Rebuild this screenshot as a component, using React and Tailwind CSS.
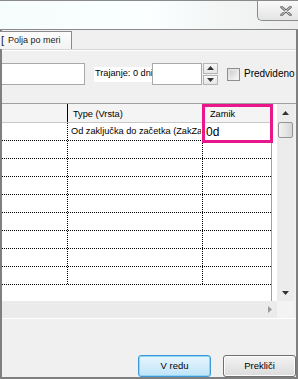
import React from 'react';

const rows = Array.from({ length: 9 });

const Up = () => (
  <svg width="7" height="4" viewBox="0 0 7 4"><path d="M0 4 L3.5 0 L7 4 Z" fill="#333" /></svg>
);
const Down = () => (
  <svg width="7" height="4" viewBox="0 0 7 4"><path d="M0 0 L3.5 4 L7 0 Z" fill="#333" /></svg>
);

export default function App() {
  return (
    <div className="relative w-[298px] h-[379px] overflow-hidden bg-[#f0f0f0] text-[9.2px] leading-none text-black" style={{ fontFamily: '"Liberation Sans", Arial, sans-serif' }}>
      {/* Title bar */}
      <div className="relative h-[30px] border-t border-b border-[#8a8a8a] bg-gradient-to-r from-[#f6fdfd] via-[#fbffff] to-[#ececec]">
        <div className="absolute right-0 top-0 w-[41px] h-[20px] border-l border-b border-[#8c8c8c] rounded-bl-[5px] bg-gradient-to-b from-[#fafafa] to-[#e4e4e4] flex items-center justify-center pl-[16px]">
          <svg width="12" height="10" viewBox="0 0 12 10">
            <path d="M1.5 1 L10.5 9 M10.5 1 L1.5 9" stroke="#6a6a6a" strokeWidth="2.6" strokeLinecap="round" />
            <path d="M1.5 1 L10.5 9 M10.5 1 L1.5 9" stroke="#f4f4f4" strokeWidth="0.8" strokeLinecap="round" />
          </svg>
        </div>
      </div>

      {/* Body with window borders */}
      <div className="h-[349px] border-l-2 border-r-2 border-b-2 border-[#7f7f7f] flex flex-col">
        {/* Tab row */}
        <div className="h-[20px] flex items-end border-b border-[#d6d6d6]">
          <div className="h-[18px] w-[72px] -ml-[2px] border-t border-r border-[#8a8a8a] bg-gradient-to-b from-[#fdfdfd] to-[#f3f3f3] flex items-center pl-[1px] whitespace-nowrap text-[9px]">
            <span className="text-[#222] text-[11px]">[</span>
            <span className="ml-[4px] text-[#1a1a1a]">Polja po meri</span>
          </div>
        </div>
        <div className="h-px bg-white" />

        {/* Inputs row */}
        <div className="mt-[12px] h-[22px] flex items-center whitespace-nowrap">
          <div className="w-[83px] h-[22px] bg-white border border-l-0 border-[#a9a9a9] shrink-0" />
          <div className="ml-[9px] w-[58px] h-[15px] pl-[1px] bg-white flex items-center shrink-0">Trajanje: 0 dni</div>
          <div className="w-[50px] h-[22px] bg-white border border-[#a9a9a9] shrink-0" />
          <div className="ml-[1px] w-[15px] h-[22px] flex flex-col gap-px shrink-0">
            <div className="flex-1 border border-[#b5b5b5] bg-gradient-to-b from-[#f7f7f7] to-[#e6e6e6] flex items-center justify-center"><Up /></div>
            <div className="flex-1 border border-[#b5b5b5] bg-gradient-to-b from-[#f7f7f7] to-[#e6e6e6] flex items-center justify-center"><Down /></div>
          </div>
          <div className="ml-[9px] w-[13px] h-[13px] border border-[#8e8f8f] bg-gradient-to-br from-[#dcdcdc] to-[#f6f6f6] p-[2px] shrink-0">
            <div className="w-full h-full bg-gradient-to-br from-[#cfcfcf] to-[#f4f4f4]" />
          </div>
          <span className="ml-[4px] text-[10px]">Predvideno</span>
        </div>

        {/* Grid */}
        <div className="mt-[18px] border-t border-[#a0a0a0] flex">
          <div className="w-[275px] flex flex-col">
            <div className="h-[197px] bg-white flex">
              <div className="w-[270px] border-r border-[#a0a0a0] flex flex-col">
                {/* Header */}
                <div className="h-[19px] flex border-b border-[#c8c8c8] bg-[#f4f4f4]">
                  <div className="w-[66px] border-r border-black" />
                  <div className="w-[135px] border-r border-[#d0d0d0] flex items-end pb-[3px] pl-[5px]">Type (Vrsta)</div>
                  <div className="flex-1 flex items-end pb-[3px] pl-[7px]">Zamik</div>
                </div>
                {rows.map((_, i) => (
                  <div key={i} className="h-[18px] flex border-b border-dotted border-black">
                    <div className="w-[66px] border-r border-dotted border-black" />
                    <div className="w-[135px] border-r border-dotted border-black flex items-center pl-[3px]">
                      {i === 0 && <span className="block w-[130px] overflow-hidden whitespace-nowrap">Od zaključka do začetka (ZakZač)</span>}
                    </div>
                    <div className="flex-1 flex items-center pl-[3px] text-[12px]">
                      {i === 0 && <span>0d</span>}
                    </div>
                  </div>
                ))}
              </div>
              <div className="flex-1" />
            </div>
            {/* Horizontal scrollbar */}
            <div className="h-[17px] bg-[#ebebeb] flex items-center justify-end pr-[5px]">
              <svg width="4" height="7" viewBox="0 0 4 7"><path d="M0 0 L4 3.5 L0 7 Z" fill="#9a9a9a" /></svg>
            </div>
          </div>
          {/* Vertical scrollbar */}
          <div className="w-[17px] flex flex-col">
            <div className="h-[197px] bg-[#ececec] flex flex-col items-center">
              <div className="h-[18px] flex items-center justify-center"><Up /></div>
              <div className="w-[15px] h-[16px] border border-[#959595] rounded-[2px] bg-gradient-to-r from-[#f2f2f2] via-[#e6e6e6] to-[#d6d6d6]" />
              <div className="flex-1" />
              <div className="h-[16px] flex items-center justify-center"><Down /></div>
            </div>
            <div className="h-[17px] bg-[#f3f3f3]" />
          </div>
        </div>
        <div className="h-px bg-white" />

        {/* Buttons */}
        <div className="flex-1 flex items-end justify-end gap-[12px]">
          <button className="w-[73px] h-[22px] rounded-[3px] border border-[#3c9bd6] bg-gradient-to-b from-[#e8f6fd] to-[#bfe4f9] shadow-[inset_0_0_0_1px_#8fd3f5] text-[9.5px] flex items-center justify-center">V redu</button>
          <button className="w-[73px] h-[22px] rounded-[3px] border border-[#707070] bg-gradient-to-b from-[#f3f3f3] to-[#dcdcdc] shadow-[inset_0_0_0_1px_#fcfcfc] text-[9.5px] flex items-center justify-center">Prekliči</button>
        </div>
      </div>

      {/* Highlight box */}
      <div className="absolute left-[202px] top-[104px] w-[71px] h-[39px] border-[3px] border-[#ea168c]" />
    </div>
  );
}
